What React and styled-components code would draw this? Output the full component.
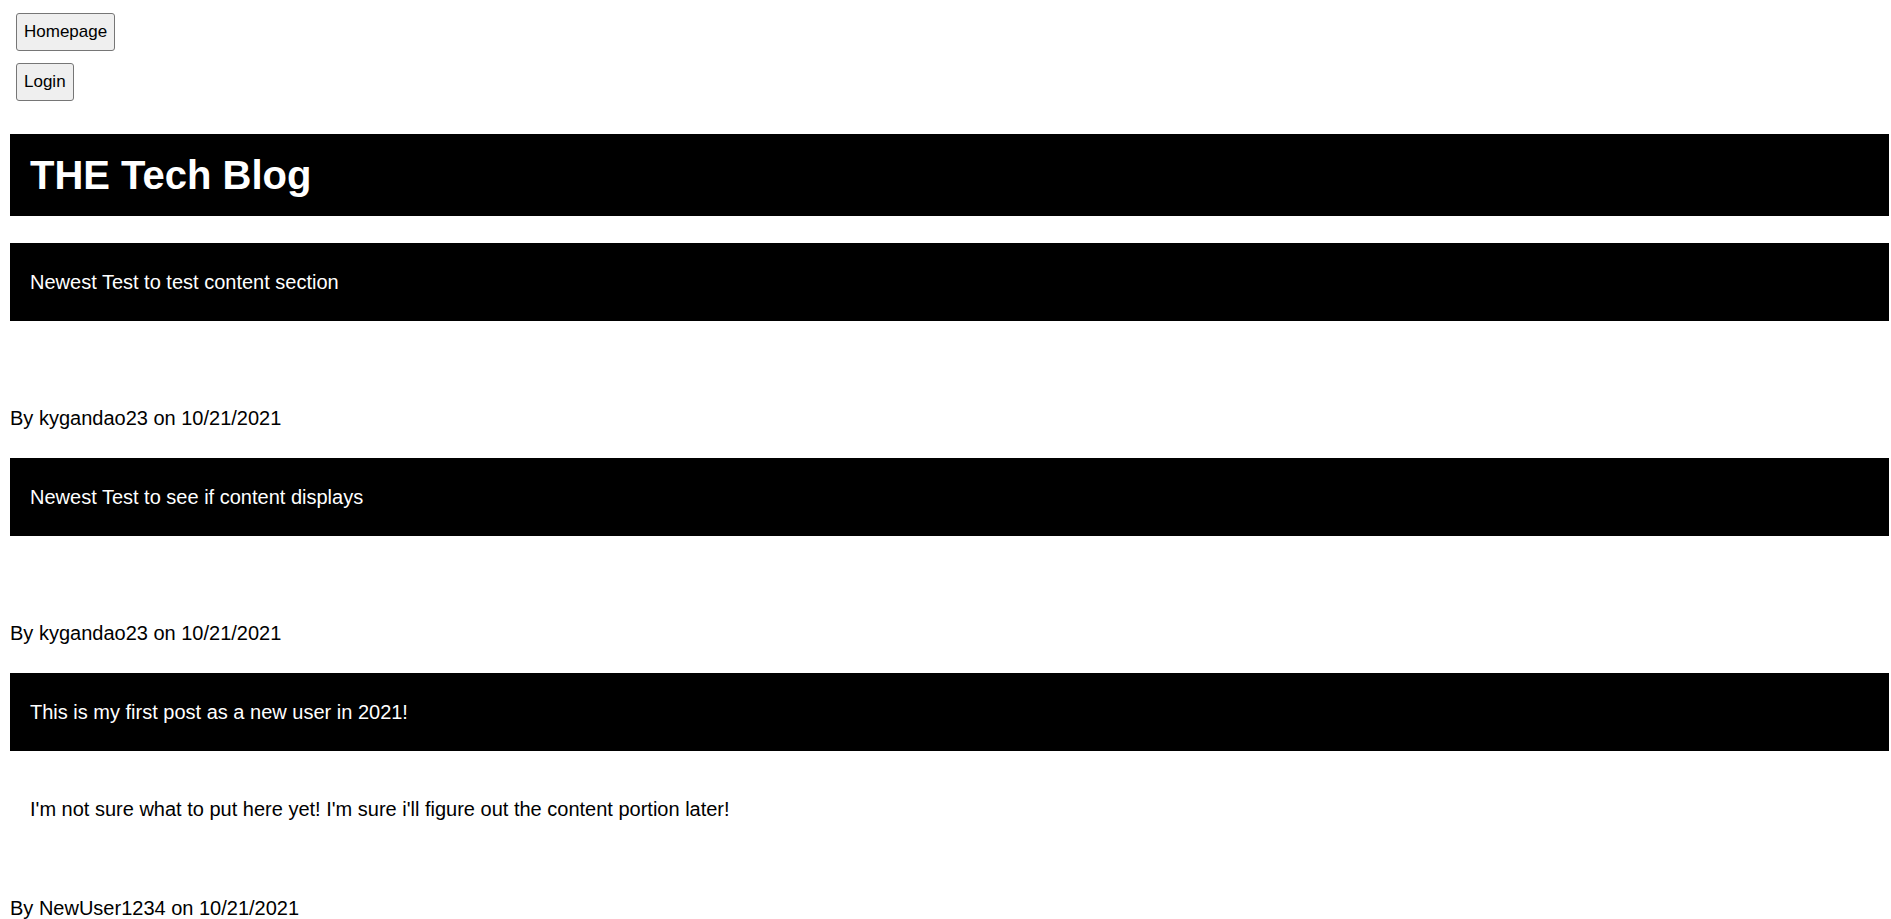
import React from "react";
import styled, { createGlobalStyle } from "styled-components";

const GlobalStyle = createGlobalStyle`
  body {
    margin: 0;
    background: #fff;
    color: #000;
    font-family: "Liberation Sans", Arial, sans-serif;
  }
`;

const Page = styled.div`
  padding: 0 2px 40px 10px;
`;

const Nav = styled.nav`
  display: flex;
  flex-direction: column;
  align-items: flex-start;
  gap: 12px;
  padding: 13px 0 0 6px;
`;

const NavBtn = styled.button`
  font-family: "Liberation Sans", Arial, sans-serif;
  font-size: 17px;
  color: #000;
  background-color: #efefef;
  border: 1px solid #767676;
  border-radius: 3px;
  height: 38px;
  padding: 0 7px;
  cursor: pointer;
`;

const Header = styled.header`
  background-color: #000;
  height: 82px;
  margin-top: 33px;
  padding: 0 20px;
  display: flex;
  align-items: center;
`;

const Title = styled.h1`
  margin: 0;
  color: #fff;
  font-size: 40px;
  font-weight: 700;
`;

const Post = styled.article`
  margin-top: 27px;

  & + & {
    margin-top: 28px;
  }
`;

const PostTitle = styled.h2`
  margin: 0;
  background-color: #000;
  color: #fff;
  height: 78px;
  padding: 0 20px;
  display: flex;
  align-items: center;
  font-size: 20px;
  font-weight: 400;
`;

const Content = styled.p`
  margin: 0;
  padding: ${({ $empty }) => ($empty ? "10px 20px 0" : "47px 20px 0")};
  font-size: 20px;
  line-height: 23px;
`;

const Byline = styled.p`
  margin: 76px 0 0;
  font-size: 20px;
  line-height: 23px;
`;

const posts = [
  {
    id: 1,
    title: "Newest Test to test content section",
    content: "",
    user: "kygandao23",
    date: "10/21/2021",
  },
  {
    id: 2,
    title: "Newest Test to see if content displays",
    content: "",
    user: "kygandao23",
    date: "10/21/2021",
  },
  {
    id: 3,
    title: "This is my first post as a new user in 2021!",
    content:
      "I'm not sure what to put here yet! I'm sure i'll figure out the content portion later!",
    user: "NewUser1234",
    date: "10/21/2021",
  },
];

const App = () => {
  return (
    <Page>
      <GlobalStyle />
      <Nav>
        <NavBtn>Homepage</NavBtn>
        <NavBtn>Login</NavBtn>
      </Nav>

      <Header>
        <Title>THE Tech Blog</Title>
      </Header>

      {posts.map((post) => (
        <Post key={post.id}>
          <PostTitle>{post.title}</PostTitle>
          <Content $empty={!post.content}>{post.content}</Content>
          <Byline>
            By {post.user} on {post.date}
          </Byline>
        </Post>
      ))}
    </Page>
  );
};

export default App;
